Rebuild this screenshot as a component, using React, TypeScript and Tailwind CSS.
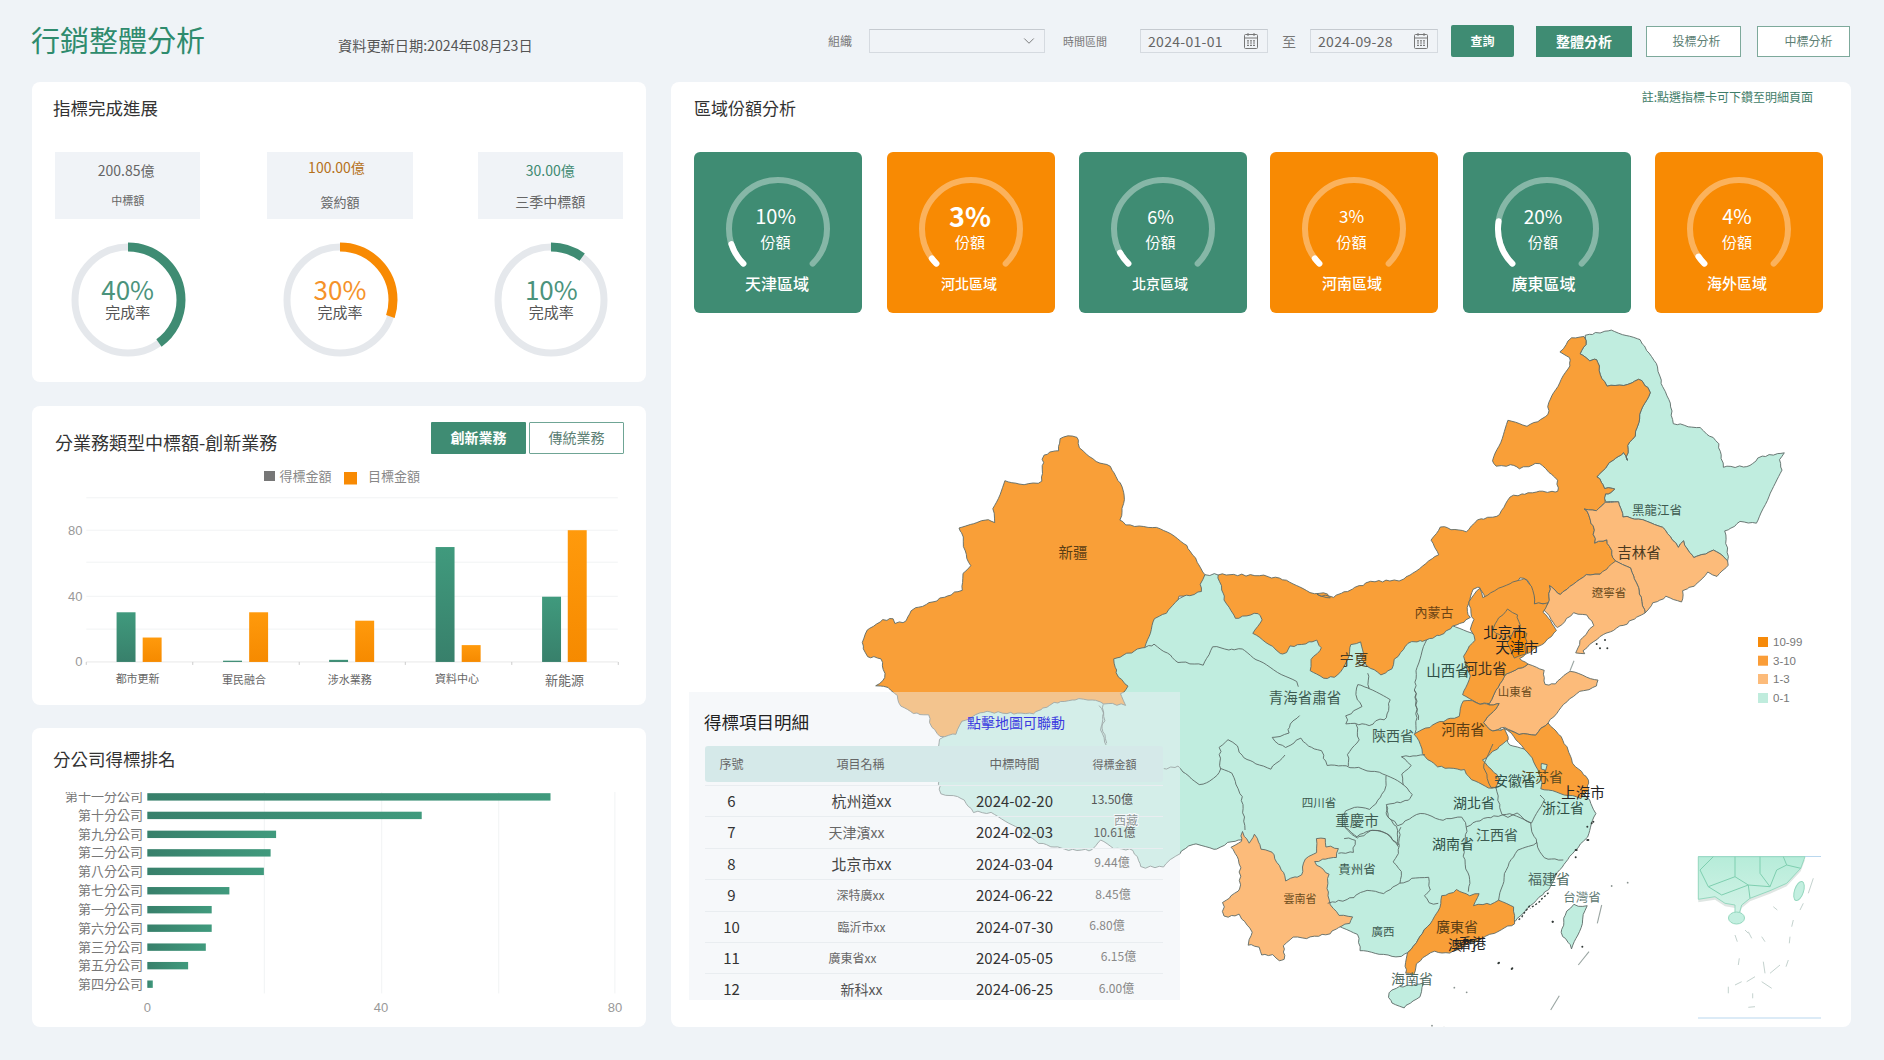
import React from "react";
import { ChevronDown } from "lucide-react";

type Pt = [number, number];
const crop = (ox: number, oy: number, sx: number, sy: number) => (...n: number[]): Pt[] => {
  const out: Pt[] = [];
  for (let i = 0; i < n.length; i += 2) out.push([ox + n[i] / sx, oy + n[i + 1] / sy]);
  return out;
};
const C4 = crop(670, 680, 2.958, 3);
const C6 = crop(850, 420, 3, 3);
const C7 = crop(1300, 320, 3, 3);
const C8 = crop(1100, 640, 3, 3);
const C9 = crop(1190, 800, 3, 3);
const C10 = crop(1680, 620, 3, 3);
const C11 = crop(1280, 610, 3, 3);
const C12 = crop(1400, 570, 3, 3);

const wob = (x: number, y: number): Pt => [
  x + 0.65 * Math.sin(x * 1.37 + y * 0.73) + 0.35 * Math.sin(x * 3.1 - y * 2.3),
  y + 0.65 * Math.sin(y * 1.51 - x * 0.67) + 0.35 * Math.sin(y * 2.9 + x * 2.1),
];
const toPath = (pts: Pt[], closed = true, rough = true) => {
  const all = closed ? [...pts, pts[0]] : pts;
  let d = "";
  for (let i = 0; i < all.length - 1; i++) {
    const [a, b] = [all[i], all[i + 1]];
    const steps = rough ? Math.max(1, Math.round(Math.hypot(b[0] - a[0], b[1] - a[1]) / 4)) : 1;
    for (let s = 0; s < steps; s++) {
      const t = s / steps;
      const x = a[0] + (b[0] - a[0]) * t;
      const y = a[1] + (b[1] - a[1]) * t;
      const [px, py] = rough ? wob(x, y) : [x, y];
      d += `${d ? "L" : "M"}${px.toFixed(1)} ${py.toFixed(1)}`;
    }
  }
  if (!closed) d += `L${all[all.length - 1][0].toFixed(1)} ${all[all.length - 1][1].toFixed(1)}`;
  return d + (closed ? "Z" : "");
};

const GREEN = "#c0eddf";
const O1 = "#f99f38";
const O2 = "#fcbb7a";
const O3 = "#f68a0a";

const mainland: Pt[] = [
  ...C6(1065, 465, 1103, 463),
  [1300, 620], [1440, 620], [1490, 640], [1480, 690], [1510, 745], [1560, 760], [1580, 785],
  ...C8(1440, 455, 1462, 470, 1487, 520, 1472, 560, 1460, 592, 1425, 630, 1397, 665, 1372, 700, 1345, 750, 1300, 790, 1245, 845),
  ...C9(720, 370, 655, 460, 620, 470, 570, 462, 510, 450, 505, 405, 460, 385, 300, 300, 200, 300, 155, 120),
  ...C8(395, 605, 340, 630, 290, 610, 265, 620, 210, 660, 190, 680, 125, 682, 100, 630, 40, 625, 0, 600),
  ...C4(1250, 510, 1180, 510, 1090, 490, 1020, 440, 950, 400, 900, 395, 860, 355, 800, 340, 795, 310, 795, 190),
  ...C6(270, 960, 400, 850, 600, 800, 900, 600, 1040, 500),
];

const xinjiang = C6(630, 55, 655, 48, 680, 50, 690, 85, 740, 125, 780, 140, 805, 180, 825, 225, 810, 300, 830, 315, 930, 325, 1010, 375, 1065, 465, 1050, 490, 1055, 515, 1020, 525, 990, 530, 950, 580, 915, 595, 885, 680, 790, 718, 800, 760, 835, 800, 812, 820, 825, 855, 760, 850, 700, 835, 610, 850, 550, 880, 480, 880, 400, 875, 335, 905, 320, 940, 270, 950, 240, 910, 235, 885, 190, 880, 150, 860, 140, 825, 115, 805, 80, 795, 105, 775, 95, 715, 50, 710, 35, 665, 50, 630, 100, 600, 130, 595, 135, 610, 170, 605, 185, 570, 250, 545, 335, 510, 340, 460, 360, 440, 345, 390, 335, 340, 325, 325, 405, 300, 435, 305, 430, 265, 465, 180, 510, 195, 575, 185, 580, 105, 625, 90);

const neimeng: Pt[] = [
  ...C7(780, 95, 815, 55, 855, 50, 858, 75, 840, 100, 870, 122, 890, 118, 905, 175, 920, 197, 985, 195, 1015, 175, 1050, 215, 1020, 285, 1005, 345, 985, 375, 980, 420, 972, 395, 930, 430, 890, 470, 915, 505, 945, 505, 935, 518, 915, 522, 915, 548, 890, 575, 855, 565, 880, 620, 885, 670, 920, 658, 945, 725, 940, 745, 900, 762, 860, 765, 780, 825, 750, 795, 745, 852, 705, 850, 685, 780, 660, 775, 640, 810, 555, 835, 540, 800, 520, 808, 500, 860, 510, 895),
  ...C12(160, 170, 120, 195, 80, 210, 50, 215),
  ...C11(385, 100, 345, 150, 335, 175, 305, 195, 270, 175, 245, 150, 250, 120, 240, 95, 215, 105, 195, 170, 165, 200, 130, 205, 90, 180, 95, 150, 125, 115, 110, 92, 30, 110, 20, 130),
  ...C6(1290, 700, 1270, 680, 1210, 640, 1235, 600, 1225, 580, 1155, 595, 1125, 540, 1103, 463, 1240, 467, 1310, 480, 1380, 520, 1430, 520, 1440, 535),
  ...C7(50, 825, 100, 830, 210, 785, 310, 780, 415, 705, 395, 660, 420, 620, 500, 635, 530, 600, 600, 585, 630, 530, 720, 515, 775, 515, 770, 480, 720, 430, 660, 445, 630, 435, 590, 440, 578, 420, 625, 300, 680, 320, 745, 285, 745, 250, 810, 140, 810, 110),
];

const hlj = C7(855, 45, 935, 30, 1020, 60, 1065, 120, 1085, 190, 1110, 250, 1120, 310, 1200, 325, 1255, 370, 1270, 440, 1340, 440, 1385, 410, 1455, 398, 1440, 420, 1445, 450, 1410, 520, 1370, 610, 1320, 605, 1275, 635, 1285, 720, 1240, 690, 1180, 715, 1150, 665, 1135, 680, 1090, 620, 1030, 600, 970, 590, 955, 545, 915, 545, 915, 522, 935, 518, 945, 505, 915, 505, 890, 470, 930, 430, 972, 395, 980, 420, 985, 375, 1005, 345, 1020, 285, 1050, 215, 1015, 175, 985, 195, 920, 197, 905, 175, 890, 118, 870, 122, 840, 100, 858, 75);
const jilin = C7(915, 548, 955, 545, 970, 590, 1030, 600, 1090, 620, 1135, 680, 1150, 665, 1180, 715, 1240, 690, 1285, 720, 1285, 735, 1250, 770, 1225, 755, 1190, 790, 1150, 815, 1145, 845, 1100, 830, 1060, 850, 1035, 880, 1015, 800, 990, 745, 945, 725, 920, 658, 885, 670, 880, 620, 855, 565, 890, 575);
const liaoning = C7(945, 725, 990, 745, 1015, 800, 1035, 880, 990, 905, 950, 925, 890, 955, 850, 990, 855, 1000, 830, 1000, 840, 960, 880, 915, 860, 885, 820, 880, 775, 925, 730, 870, 745, 852, 750, 795, 780, 825, 860, 765, 900, 762);
const hebei = C12(205, 95, 240, 55, 250, 80, 330, 40, 375, 25, 400, 60, 405, 100, 445, 100, 430, 125, 470, 180, 435, 220, 390, 245, 375, 250, 360, 265, 385, 285, 345, 300, 320, 310, 300, 340, 280, 375, 270, 400, 240, 400, 190, 375, 210, 320, 190, 260, 225, 210, 210, 175, 220, 150);
const beijing = C12(290, 150, 325, 120, 350, 135, 360, 165, 345, 190, 310, 205, 280, 180);
const tianjin = C12(345, 180, 380, 190, 375, 250, 345, 265, 320, 220);
const henan = C12(190, 390, 240, 400, 270, 405, 300, 400, 250, 460, 280, 485, 315, 475, 325, 510, 300, 530, 270, 550, 250, 570, 295, 625, 290, 650, 265, 655, 215, 630, 195, 600, 110, 590, 75, 560, 45, 490, 120, 455, 175, 440);
const shandong = C12(280, 375, 300, 340, 320, 310, 345, 300, 385, 285, 430, 300, 435, 345, 465, 340, 510, 305, 595, 330, 590, 350, 540, 365, 500, 395, 445, 460, 405, 495, 345, 490, 315, 470, 280, 485, 250, 460, 300, 400, 270, 405, 270, 400);
const jiangsu = C12(315, 475, 345, 490, 405, 495, 445, 460, 490, 510, 520, 580, 565, 630, 565, 660, 540, 685, 480, 670, 420, 655, 425, 640, 415, 600, 395, 565, 335, 490);
const yunnan = C9(155, 95, 175, 130, 195, 105, 215, 145, 245, 155, 290, 240, 335, 225, 345, 175, 380, 155, 380, 115, 405, 115, 410, 140, 445, 145, 440, 170, 375, 185, 415, 225, 410, 265, 420, 315, 445, 345, 485, 350, 480, 370, 455, 375, 420, 400, 350, 415, 310, 410, 280, 435, 285, 480, 265, 480, 250, 465, 215, 465, 205, 440, 175, 435, 185, 395, 150, 345, 100, 350, 100, 310, 150, 265, 150, 190, 125, 140, 155, 125);
const guangdong = C9(755, 290, 800, 270, 840, 285, 865, 280, 850, 315, 915, 310, 925, 300, 970, 320, 975, 370, 900, 405, 840, 430, 780, 460, 720, 455, 680, 490, 670, 525, 650, 520, 645, 485, 655, 460, 720, 370, 750, 325);
const hainan = C9(595, 580, 630, 560, 700, 550, 690, 590, 640, 625, 605, 610);
const taiwan = C9(1125, 345, 1150, 315, 1190, 320, 1175, 370, 1145, 445, 1115, 400);

const provinces: { p: Pt[]; f: string }[] = [
  { p: mainland, f: GREEN },
  { p: hlj, f: GREEN },
  { p: hainan, f: GREEN },
  { p: taiwan, f: GREEN },
  { p: xinjiang, f: O1 },
  { p: neimeng, f: O1 },
  { p: jilin, f: O2 },
  { p: liaoning, f: O2 },
  { p: shandong, f: O2 },
  { p: yunnan, f: O2 },
  { p: hebei, f: O1 },
  { p: henan, f: O1 },
  { p: jiangsu, f: O1 },
  { p: guangdong, f: O1 },
  { p: beijing, f: O1 },
  { p: tianjin, f: O3 },
  { p: C12(425, 580, 440, 585, 435, 600, 422, 598), f: GREEN },
];

const borders: Pt[][] = [
  C6(885, 680, 915, 675, 950, 700, 985, 725, 1060, 735, 1090, 680, 1145, 690, 1175, 685, 1230, 725, 1340, 785, 1345, 800),
  C6(750, 855, 762, 880, 755, 910, 770, 970),
  C4(1280, 75, 1285, 120, 1275, 150, 1290, 195),
  C8(190, 388, 235, 380, 265, 410, 300, 435, 330, 425, 360, 400, 360, 320, 385, 300, 410, 315, 430, 355, 470, 370, 510, 385, 555, 345),
  C8(600, 225, 570, 250, 565, 280, 515, 295, 555, 325, 600, 295, 625, 320, 665, 335, 680, 375, 740, 378, 800, 390, 860, 405, 910, 435, 935, 465, 925, 480, 860, 495, 860, 525, 890, 560, 895, 615),
  C8(360, 385, 395, 400, 425, 470, 435, 570),
  C8(860, 410, 855, 450, 810, 510, 775, 500, 735, 510, 735, 565, 770, 590, 810, 570, 850, 575, 895, 615),
  C8(770, 250, 775, 300, 745, 345, 745, 378),
  C8(805, 100, 805, 145, 775, 135, 765, 165, 785, 200, 740, 225, 740, 250, 820, 255, 830, 240, 860, 235, 870, 180, 805, 145),
  C11(440, 90, 410, 170, 405, 240, 415, 330),
  C8(945, 150, 950, 230, 945, 280),
  C8(975, 345, 905, 350, 935, 375, 905, 400, 910, 435),
  C9(415, 310, 470, 300, 530, 270, 580, 280, 630, 250, 690, 230, 715, 235, 720, 270, 705, 285, 720, 310, 745, 310),
  C9(630, 80, 625, 160, 610, 185, 635, 215, 630, 250),
  C9(590, 20, 595, 50, 625, 75, 690, 40, 760, 60, 815, 50, 830, 80, 820, 170, 840, 240, 835, 275),
  C9(465, 85, 500, 115, 550, 90, 590, 100, 625, 140),
  C9(465, 115, 495, 120, 490, 155, 445, 160),
  C9(830, 80, 880, 55, 960, 40, 1020, 70, 1040, 130),
  C9(925, 300, 955, 190, 985, 150, 1040, 130, 1060, 175, 1120, 180),
  C8(1180, 310, 1150, 370, 1170, 440, 1190, 445, 1205, 525, 1225, 535, 1250, 520, 1295, 550, 1335, 480, 1320, 465),
];

const dots: Pt[] = [
  ...C9(925, 490, 965, 507, 1088, 365, 1177, 440, 1157, 150, 1157, 172, 1192, 120, 1205, 70),
  ...C7(890, 972, 915, 960, 922, 985, 900, 985),
  ...C8(1358, 845, 1197, 968, 1237, 985, 1480, 545, 1462, 560, 1430, 630, 1465, 600),
];
const faintDots: Pt[] = C9(793, 563, 830, 577, 726, 677, 762, 683, 1265, 258, 1313, 248);
const blackCoast: Pt[][] = [
  C8(1370, 700, 1350, 730),
  C9(1020, 320, 985, 360),
  C8(1100, 905, 1155, 895),
  C9(840, 420, 790, 450),
  C8(1345, 760, 1290, 805),
];
const dashes: Pt[][] = [
  C9(1235, 315, 1222, 370),
  C9(1197, 455, 1165, 495),
  C9(1108, 587, 1082, 630),
  C12(522, 272, 510, 302),
];

const labels: { t: string; x: number; y: number; s: number; c: string; halo?: boolean }[] = [
  { t: "新疆", x: 1073, y: 551, s: 14.5, c: "#5a3d14" },
  { t: "內蒙古", x: 1434, y: 611, s: 13, c: "#6b4415" },
  { t: "黑龍江省", x: 1657, y: 509, s: 12.5, c: "#3d5a50" },
  { t: "吉林省", x: 1639, y: 551, s: 14.5, c: "#4a3a20" },
  { t: "遼寧省", x: 1609, y: 592, s: 11.5, c: "#6b4c20" },
  { t: "北京市", x: 1505, y: 631, s: 14.5, c: "#222222" },
  { t: "天津市", x: 1517, y: 646, s: 14.5, c: "#222222" },
  { t: "河北省", x: 1485, y: 667, s: 14.5, c: "#3a3020" },
  { t: "山西省", x: 1448, y: 669, s: 14.5, c: "#2f4f46" },
  { t: "山東省", x: 1515, y: 691, s: 11.5, c: "#6b4c20" },
  { t: "河南省", x: 1463, y: 728, s: 14.5, c: "#5a3d14" },
  { t: "陝西省", x: 1393, y: 735, s: 14, c: "#3d5a50" },
  { t: "青海省肅省", x: 1305, y: 696, s: 14.5, c: "#3d5a50" },
  { t: "宁夏", x: 1354, y: 658, s: 14.5, c: "#4a3a20" },
  { t: "江苏省", x: 1542, y: 776, s: 14, c: "#5a4a20" },
  { t: "安徽省", x: 1515, y: 780, s: 14, c: "#2f4f46" },
  { t: "上海市", x: 1583, y: 791, s: 14.5, c: "#222222" },
  { t: "浙江省", x: 1563, y: 807, s: 14, c: "#2f4f46" },
  { t: "湖北省", x: 1474, y: 802, s: 14, c: "#2f4f46" },
  { t: "四川省", x: 1319, y: 802, s: 11.5, c: "#3d5a50" },
  { t: "重慶市", x: 1357, y: 819, s: 14.5, c: "#3d5a50" },
  { t: "湖南省", x: 1453, y: 843, s: 14, c: "#2f4f46" },
  { t: "江西省", x: 1497, y: 834, s: 14, c: "#3d5a50" },
  { t: "貴州省", x: 1357, y: 868, s: 12.5, c: "#3d5a50" },
  { t: "雲南省", x: 1300, y: 898, s: 11, c: "#6b4c20" },
  { t: "廣西", x: 1383, y: 931, s: 11.5, c: "#3d5a50" },
  { t: "廣東省", x: 1457, y: 926, s: 14, c: "#5a3d14" },
  { t: "香港", x: 1472, y: 942, s: 14, c: "#222222" },
  { t: "澳門", x: 1462, y: 944, s: 14, c: "#222222" },
  { t: "福建省", x: 1549, y: 878, s: 14, c: "#4f6a62" },
  { t: "台灣省", x: 1582, y: 896, s: 12.5, c: "#5f7a74" },
  { t: "海南省", x: 1412, y: 978, s: 14, c: "#4f6a62" },
  { t: "西藏", x: 1126, y: 819, s: 12, c: "#3c4a46", halo: true },
];

const insetLand = C10(55, 710, 375, 710, 362, 745, 320, 790, 270, 812, 210, 835, 185, 855, 178, 880, 165, 880, 165, 855, 135, 850, 105, 830, 55, 838);
const insetLines: Pt[][] = [
  C10(100, 710, 60, 750, 85, 800, 165, 770, 165, 710),
  C10(85, 800, 125, 825, 205, 795, 210, 835),
  C10(165, 770, 205, 795, 270, 800, 240, 760, 240, 710),
  C10(270, 800, 290, 750, 320, 735, 310, 710),
  C10(320, 735, 362, 745),
];
const insetIslands: Pt[][] = [
  C10(178, 1015, 175, 1035), C10(165, 945, 172, 965), C10(205, 935, 215, 955), C10(245, 950, 255, 965),
  C10(330, 950, 328, 970), C10(340, 900, 335, 920), C10(370, 850, 360, 870), C10(400, 775, 385, 820),
  C10(325, 1020, 318, 1040), C10(250, 1025, 255, 1060), C10(300, 1035, 270, 1060), C10(145, 1100, 145, 1120),
  C10(165, 1095, 185, 1085), C10(200, 1085, 225, 1070), C10(245, 1085, 275, 1105), C10(218, 1120, 218, 1135), C10(205, 1162, 225, 1160),
  C10(280, 860, 292, 870), C10(205, 940, 195, 930),
];

function ChinaMap() {
  return (
    <svg viewBox="671 320 1180 707" className="block w-[1180px] h-[707px] mt-[7px]">
      <defs>
        <linearGradient id="insetFade" x1="0" y1="0" x2="0" y2="1">
          <stop offset="0" stopColor="#b6ecd9" />
          <stop offset="1" stopColor="#d3f3e7" />
        </linearGradient>
      </defs>
      {provinces.map((r, i) => (
        <path key={i} d={toPath(r.p)} fill={r.f} stroke="#5c6a66" strokeWidth={0.9} strokeLinejoin="round" />
      ))}
      {borders.map((b, i) =>
        b.length > 1 ? <path key={i} d={toPath(b, false)} fill="none" stroke="#5c6a66" strokeWidth={0.9} /> : null
      )}
      {blackCoast.map((b, i) => (
        <path key={i} d={toPath(b, false)} fill="none" stroke="#2e3a36" strokeWidth={1.4} strokeDasharray="2 2" />
      ))}
      {dashes.map((b, i) => (
        <path key={i} d={toPath(b, false, false)} fill="none" stroke="#9aa5a2" strokeWidth={1.1} />
      ))}
      {dots.map((p, i) => (
        <circle key={i} cx={p[0]} cy={p[1]} r={1} fill="#333a38" />
      ))}
      {faintDots.map((p, i) => (
        <circle key={i} cx={p[0]} cy={p[1]} r={0.9} fill="#8a9390" />
      ))}
      {labels.map((l) => (
        <text
          key={l.t}
          x={l.x}
          y={l.y}
          fontSize={l.s}
          fill={l.c}
          textAnchor="middle"
          dominantBaseline="central"
          stroke={l.halo ? "#ffffff" : undefined}
          strokeWidth={l.halo ? 2 : undefined}
          paintOrder="stroke"
        >
          {l.t}
        </text>
      ))}
      {[
        ["#f68a0a", "10-99", 642],
        ["#fa9d38", "3-10", 660.7],
        ["#fcbb7a", "1-3", 679],
        ["#c0ecdd", "0-1", 698],
      ].map(([c, t, y]) => (
        <g key={t as string}>
          <rect x={1758} y={(y as number) - 5} width={10} height={10} fill={c as string} />
          <text x={1773} y={y as number} fontSize={11.5} fill="#777777" dominantBaseline="central" className="font-['Liberation_Sans',sans-serif]">
            {t}
          </text>
        </g>
      ))}
      <line x1={1698} y1={856.5} x2={1821} y2={856.5} stroke="#b9d7ee" strokeWidth={1} />
      <line x1={1698} y1={1018} x2={1821} y2={1018} stroke="#b9d7ee" strokeWidth={1} />
      <path d={toPath(insetLand, true, false)} transform="translate(0 3)" fill="#dfe6e3" />
      <path d={toPath(insetLand, true, false)} fill="url(#insetFade)" stroke="#95d8bf" strokeWidth={1} />
      {insetLines.map((b, i) => (
        <path key={i} d={toPath(b, false, false)} fill="none" stroke="#7fcfb0" strokeWidth={1} />
      ))}
      <ellipse cx={1736.5} cy={918} rx={8} ry={6} fill="#c3efe0" stroke="#95d8bf" />
      <ellipse cx={1799} cy={891} rx={4.5} ry={10} transform="rotate(18 1799 891)" fill="#c3efe0" stroke="#95d8bf" />
      {insetIslands.map((b, i) => (
        <path key={i} d={toPath(b, false, false)} fill="none" stroke="#c4d2ce" strokeWidth={1} />
      ))}
    </svg>
  );
}

function Calendar() {
  return (
    <svg viewBox="0 0 16 18" className="w-[16px] h-[18px]" fill="none" stroke="#777" strokeWidth={1}>
      <rect x="1.5" y="2.5" width="13" height="14" rx="1" />
      <path d="M1.5 6h13M5 1v3M11 1v3" />
      <path d="M4 8.8h2M7 8.8h2M10 8.8h2M4 11h2M7 11h2M10 11h2M4 13.4h2M7 13.4h2M10 13.4h2" strokeWidth={1.2} />
    </svg>
  );
}

function Donut({ pct, color, numClass }: { pct: number; color: string; numClass: string }) {
  const r = 53;
  const len = 2 * Math.PI * r;
  return (
    <div className="relative w-[118px] h-[118px]">
      <svg viewBox="0 0 118 118" className="w-[118px] h-[118px]">
        <circle cx="59" cy="59" r={r} fill="none" stroke="#e5e8ec" strokeWidth={7} />
        <circle
          cx="59"
          cy="59"
          r={r}
          fill="none"
          stroke={color}
          strokeWidth={9}
          strokeDasharray={`${(len * pct) / 100} ${len}`}
          transform="rotate(-90 59 59)"
        />
      </svg>
      <div className="absolute inset-0 flex flex-col items-center pt-[32px]">
        <div className={`h-[32px] leading-[32px] text-[26px] ${numClass}`}>{pct}%</div>
        <div className="h-[22px] leading-[22px] -mt-[4px] text-[15px] text-[#555]">完成率</div>
      </div>
    </div>
  );
}

const arcPoint = (deg: number, r: number): Pt => {
  const a = ((deg - 90) * Math.PI) / 180;
  return [60 + r * Math.cos(a), 55 + r * Math.sin(a)];
};
const arc = (from: number, to: number, r = 49) => {
  const [x1, y1] = arcPoint(from, r);
  const [x2, y2] = arcPoint(to, r);
  return `M${x1.toFixed(2)} ${y1.toFixed(2)}A${r} ${r} 0 ${to - from > 180 ? 1 : 0} 1 ${x2.toFixed(2)} ${y2.toFixed(2)}`;
};

const regionCards = [
  { pct: 10, name: "天津區域", bg: "bg-[#3f8c73]", track: "#86b7a7", pctC: "text-[20px]", nameC: "text-[16px] pr-[2px]", m: "", tx: "pr-[5px]" },
  { pct: 3, name: "河北區域", bg: "bg-[#f88a03]", track: "#fbb25c", pctC: "text-[27px] font-bold", nameC: "text-[14px] pr-[4px]", m: "ml-[25px]", tx: "pr-[2px]" },
  { pct: 6, name: "北京區域", bg: "bg-[#3f8c73]", track: "#86b7a7", pctC: "text-[18px]", nameC: "text-[14px] pr-[6px]", m: "ml-[24px]", tx: "pr-[5px]" },
  { pct: 3, name: "河南區域", bg: "bg-[#f88a03]", track: "#fbb25c", pctC: "text-[17px]", nameC: "text-[15px] pr-[4px]", m: "ml-[23px]", tx: "pr-[5px]" },
  { pct: 20, name: "廣東區域", bg: "bg-[#3f8c73]", track: "#86b7a7", pctC: "text-[19px]", nameC: "text-[16px] pr-[7px]", m: "ml-[25px]", tx: "pr-[8px]" },
  { pct: 4, name: "海外區域", bg: "bg-[#f88a03]", track: "#fbb25c", pctC: "text-[20px]", nameC: "text-[15px] pr-[4px]", m: "ml-[24px]", tx: "pr-[4px]" },
];

function RegionCard({ c }: { c: (typeof regionCards)[number] }) {
  const start = 225;
  const sweep = (c.pct / 100) * 270;
  return (
    <div className={`w-[168px] h-[161px] rounded-[6px] ${c.m} ${c.bg} flex flex-col items-center pt-[22px] text-white`}>
      <div className="relative w-[120px] h-[100px]">
        <svg viewBox="0 0 120 100" className="w-[120px] h-[100px]">
          <path d={arc(start, start + 270)} fill="none" stroke={c.track} strokeWidth={6} strokeLinecap="round" />
          <path d={arc(start, start + sweep)} fill="none" stroke="#ffffff" strokeWidth={6} strokeLinecap="round" />
        </svg>
        <div className={`absolute inset-0 flex flex-col items-center pt-[27px] ${c.tx}`}>
          <div className={`h-[30px] leading-[30px] ${c.pctC}`}>{c.pct}%</div>
          <div className="h-[22px] leading-[22px] text-[15px]">份額</div>
        </div>
      </div>
      <div className={`h-[20px] leading-[18px] font-medium ${c.nameC}`}>{c.name}</div>
    </div>
  );
}

const X = (z: number) => z / 2.376;
const Y = (z: number) => 400 + z / 2.376;

const barData = [
  { g: [277, 322, 502], o: [339, 384, 562], t: "都市更新", cx: 327, y: 657, s: 11 },
  { g: [530, 575, 617], o: [592, 637, 502], t: "軍民融合", cx: 580, y: 660, s: 11 },
  { g: [782, 827, 615], o: [844, 889, 522], t: "涉水業務", cx: 831, y: 660, s: 11 },
  { g: [1035, 1080, 347], o: [1097, 1142, 580], t: "資料中心", cx: 1086, y: 657, s: 11 },
  { g: [1288, 1333, 465], o: [1349, 1394, 307], t: "新能源", cx: 1341, y: 661, s: 13 },
];

function BarChart() {
  const base = Y(620);
  return (
    <svg viewBox="32 460 614 244" className="block w-[614px] h-[244px] mt-[7px]">
      <defs>
        <linearGradient id="gBar" x1="0" y1="0" x2="0" y2="1">
          <stop offset="0" stopColor="#409a7d" />
          <stop offset="1" stopColor="#38806b" />
        </linearGradient>
        <linearGradient id="oBar" x1="0" y1="0" x2="0" y2="1">
          <stop offset="0" stopColor="#ff9a0c" />
          <stop offset="1" stopColor="#f68a00" />
        </linearGradient>
      </defs>
      <rect x={264} y={470} width={11} height={10} fill="#777777" />
      <text x={279.5} y={474} fontSize={13} fill="#888888" dominantBaseline="central">得標金額</text>
      <rect x={344} y={471} width={13} height={12.5} fill="#f88a03" />
      <text x={368} y={474} fontSize={13} fill="#888888" dominantBaseline="central">目標金額</text>
      {[230, 307, 383, 464, 542].map((z) => (
        <line key={z} x1={X(205)} x2={X(1468)} y1={Y(z)} y2={Y(z)} stroke="#f1f3f4" strokeWidth={1} />
      ))}
      <line x1={X(205)} x2={X(1468)} y1={base} y2={base} stroke="#e8e8e8" strokeWidth={1} />
      {[205, 458, 711, 963, 1216, 1469].map((z) => (
        <line key={z} x1={X(z)} x2={X(z)} y1={base} y2={base + 3} stroke="#cccccc" strokeWidth={1} />
      ))}
      {[["80", 307], ["40", 464], ["0", 620]].map(([t, z]) => (
        <text key={t as string} x={X(196)} y={Y(z as number)} fontSize={13} fill="#999999" textAnchor="end" dominantBaseline="central" className="font-['Liberation_Sans',sans-serif]">
          {t}
        </text>
      ))}
      {barData.map((b) => (
        <g key={b.t}>
          <rect x={X(b.g[0])} y={Y(b.g[2])} width={X(b.g[1] - b.g[0])} height={base - Y(b.g[2])} fill="url(#gBar)" />
          <rect x={X(b.o[0])} y={Y(b.o[2])} width={X(b.o[1] - b.o[0])} height={base - Y(b.o[2])} fill="url(#oBar)" />
          <text x={X(b.cx)} y={Y(b.y)} fontSize={b.s} fill="#666666" textAnchor="middle" dominantBaseline="central">
            {b.t}
          </text>
        </g>
      ))}
    </svg>
  );
}

const rankData: [string, number, number][] = [
  ["第十一分公司", 943, 1308],
  ["第十分公司", 987, 1002],
  ["第九分公司", 1032, 656],
  ["第二分公司", 1076, 643],
  ["第八分公司", 1120, 627],
  ["第七分公司", 1166, 545],
  ["第一分公司", 1211, 503],
  ["第六分公司", 1255, 503],
  ["第三分公司", 1300, 489],
  ["第五分公司", 1344, 447],
  ["第四分公司", 1388, 363],
];

function RankChart() {
  return (
    <svg viewBox="32 792 614 235" className="block w-[614px] h-[235px]">
      <defs>
        <linearGradient id="rBar" x1="0" y1="0" x2="1" y2="0">
          <stop offset="0" stopColor="#38806b" />
          <stop offset="1" stopColor="#409a7d" />
        </linearGradient>
      </defs>
      {[628, 907, 1185, 1461].map((z) => (
        <line key={z} x1={X(z)} x2={X(z)} y1={Y(915)} y2={Y(1410)} stroke="#f1f3f4" strokeWidth={1} />
      ))}
      {rankData.map(([t, y, e]) => (
        <g key={t}>
          <text x={X(340)} y={Y(y) - 1} fontSize={13} fill="#777777" textAnchor="end" dominantBaseline="central">{t}</text>
          <rect x={X(350)} y={Y(y) - 3.7} width={X(e - 350)} height={7.4} fill="url(#rBar)" />
        </g>
      ))}
      {[["0", 350], ["40", 905], ["80", 1461]].map(([t, z]) => (
        <text key={t as string} x={X(z as number)} y={Y(1443)} fontSize={13} fill="#999999" textAnchor="middle" dominantBaseline="central" className="font-['Liberation_Sans',sans-serif]">
          {t}
        </text>
      ))}
    </svg>
  );
}

const rows = [
  { n: 6, name: "杭州道xx", nc: "text-[15px] text-[#444] pl-[2px]", d: "2024-02-20", a: "13.50億", ac: "text-[12px] text-[#555] pr-[5px] mb-[5px]" },
  { n: 7, name: "天津濱xx", nc: "text-[14px] text-[#666] pr-[8px]", d: "2024-02-03", a: "10.61億", ac: "text-[12px] text-[#666] mb-[2px]" },
  { n: 8, name: "北京市xx", nc: "text-[15px] text-[#444] pl-[2px]", d: "2024-03-04", a: "9.44億", ac: "text-[12px] text-[#888] pr-[5px] mb-[4px]" },
  { n: 9, name: "深特廣xx", nc: "text-[12px] text-[#666]", d: "2024-06-22", a: "8.45億", ac: "text-[12px] text-[#888] pr-[3px] mb-[3px]" },
  { n: 10, name: "臨沂市xx", nc: "text-[12px] text-[#666] pl-[2px]", d: "2024-07-30", a: "6.80億", ac: "text-[12px] text-[#888] pr-[15px] mb-[3px]" },
  { n: 11, name: "廣東省xx", nc: "text-[12px] text-[#666] pr-[16px]", d: "2024-05-05", a: "6.15億", ac: "text-[12px] text-[#888] pl-[8px] mb-[4px]" },
  { n: 12, name: "新科xx", nc: "text-[14px] text-[#555] pl-[2px]", d: "2024-06-25", a: "6.00億", ac: "text-[12px] text-[#888] pl-[4px] mb-[4px]" },
];

function ProjectTable() {
  return (
    <div className="absolute left-[18px] top-[610px] w-[491px] h-[308px] overflow-hidden bg-[rgba(235,240,245,0.46)]">
      <div className="h-[54px] pt-[7px] pl-[15px] flex items-center">
        <div className="w-[106px] text-[17.5px] text-[#222] whitespace-nowrap">得標項目明細</div>
        <div className="ml-[157px] text-[14px] text-[#3a3ae0] whitespace-nowrap">點擊地圖可聯動</div>
      </div>
      <div className="mx-[16px] w-[458px]">
        <div className="h-[36px] rounded-[3px] bg-[#d5e9e9] grid grid-cols-[53px_205px_103px_97px] items-center text-[#666] text-center">
          <div className="text-[12px]">序號</div>
          <div className="text-[12px]">項目名稱</div>
          <div className="text-[12.5px]">中標時間</div>
          <div className="text-[11px]">得標金額</div>
        </div>
        <div className="mt-[3px] border-t border-[#e9edf0]">
          {rows.map((r) => (
            <div key={r.n} className="h-[31.4px] border-b border-[#e9edf0] grid grid-cols-[53px_205px_103px_97px] items-center text-center whitespace-nowrap">
              <div className="text-[15px] text-[#333]">{r.n}</div>
              <div className={r.nc}>{r.name}</div>
              <div className="text-[15px] text-[#333]">{r.d}</div>
              <div className={r.ac}>{r.a}</div>
            </div>
          ))}
        </div>
      </div>
    </div>
  );
}

function DateBox({ value }: { value: string }) {
  return (
    <div className="w-[128px] h-[24px] flex items-center justify-between pl-[7px] pr-[8px] border border-[#d5dae0] border-t-[#c5cad0] text-[14px] tracking-[0.3px] text-[#666] bg-[#f0f3f7]">
      <span>{value}</span>
      <Calendar />
    </div>
  );
}

export default function App() {
  return (
    <div className="w-[1884px] h-[1060px] bg-[#eff3f7] px-[32px] font-['Noto_Sans_CJK_TC','Noto_Sans',sans-serif] overflow-hidden">
      <header className="h-[82px] flex items-center">
        <h1 className="w-[172px] text-[29px] leading-none -mt-[4px] -ml-[1px] text-[#2e8b6d] whitespace-nowrap">行銷整體分析</h1>
        <div className="ml-[135px] mt-[10px] text-[14.2px] text-[#555] whitespace-nowrap">資料更新日期:2024年08月23日</div>
        <div className="ml-auto mr-[2px] flex items-center">
          <span className="text-[12px] text-[#777] mr-[17px]">組織</span>
          <div className="w-[176px] h-[24px] flex items-center justify-end pr-[6px] border border-[#d5dae0] border-t-[#c5cad0] bg-[#f0f3f7]">
            <ChevronDown size={18} strokeWidth={1} color="#555" />
          </div>
          <span className="text-[11px] text-[#777] ml-[18px] mr-[33px] whitespace-nowrap">時間區間</span>
          <DateBox value="2024-01-01" />
          <span className="w-[42px] text-center text-[14px] text-[#777]">至</span>
          <DateBox value="2024-09-28" />
          <button className="ml-[13px] w-[63px] h-[32px] rounded-[2px] bg-[#3f8c73] text-white text-[12px] font-bold">查詢</button>
          <button className="ml-[22px] w-[96px] h-[31px] bg-[#3f8c73] text-white text-[14px] font-bold">整體分析</button>
          <button className="ml-[14px] w-[95px] h-[31px] pl-[6px] bg-white border border-[#7da99b] text-[#5d7f74] text-[12px]">投標分析</button>
          <button className="ml-[16px] w-[93px] h-[31px] pl-[10px] bg-white border border-[#7da99b] text-[#5d7f74] text-[12px]">中標分析</button>
        </div>
      </header>

      <div className="flex gap-[25px]">
        <div className="w-[614px] flex flex-col gap-[23.5px]">
          <section className="h-[300px] bg-white rounded-[8px] px-[23px]">
            <h2 className="h-[54px] pb-[2px] -ml-[2px] flex items-center text-[17.5px] font-normal text-[#333]">指標完成進展</h2>
            <div className="mt-[16px] flex">
              <div className="w-[146px] h-[67px] bg-[#f0f3f7] flex flex-col items-center pt-[8px]">
                <div className="h-[20px] leading-[20px] pr-[3px] text-[14px] text-[#666]">200.85億</div>
                <div className="h-[18px] leading-[18px] mt-[11px] text-[11px] text-[#666]">中標額</div>
              </div>
              <div className="ml-[67px] w-[146px] h-[67px] bg-[#f0f3f7] flex flex-col items-center pt-[5px]">
                <div className="h-[20px] leading-[20px] pr-[7px] text-[14px] text-[#b5711a]">100.00億</div>
                <div className="h-[18px] leading-[18px] mt-[16px] text-[13px] text-[#666]">簽約額</div>
              </div>
              <div className="ml-[65px] w-[146px] h-[67px] bg-[#f0f3f7] flex flex-col items-center pt-[8px]">
                <div className="h-[20px] leading-[20px] text-[14px] text-[#3e8a72]">30.00億</div>
                <div className="h-[18px] leading-[18px] mt-[12px] text-[14px] text-[#666]">三季中標額</div>
              </div>
            </div>
            <div className="mt-[22px] flex">
              <div className="w-[146px] flex justify-center"><Donut pct={40} color="#3f8c73" numClass="text-[#4b937c]" /></div>
              <div className="ml-[67px] w-[146px] flex justify-center"><Donut pct={30} color="#f88a03" numClass="text-[#f5922a]" /></div>
              <div className="ml-[65px] w-[146px] flex justify-center pl-[2px]"><Donut pct={10} color="#3f8c73" numClass="text-[#4b937c]" /></div>
            </div>
          </section>

          <section className="h-[299px] bg-white rounded-[8px] pt-[16px]">
            <div className="h-[32px] pl-[23px] pr-[22px] flex justify-between items-start">
              <h2 className="mt-[4px] h-[32px] leading-[32px] text-[18px] font-normal text-[#333] whitespace-nowrap">分業務類型中標額-創新業務</h2>
              <div className="flex gap-[3px]">
                <button className="w-[95px] h-[32px] rounded-[1px] bg-[#3f8c73] text-white text-[14px] font-bold">創新業務</button>
                <button className="w-[95px] h-[32px] rounded-[1px] bg-white border border-[#6fa595] text-[#5d7f74] text-[14px]">傳統業務</button>
              </div>
            </div>
            <BarChart />
          </section>

          <section className="h-[299px] bg-white rounded-[8px]">
            <h2 className="h-[64px] pb-[2px] pl-[21px] flex items-center text-[17.5px] font-normal text-[#333]">分公司得標排名</h2>
            <RankChart />
          </section>
        </div>

        <section className="relative w-[1180px] h-[945px] bg-white rounded-[8px] overflow-hidden">
          <div className="h-[54px] pl-[23px] pr-[38px] flex justify-between">
            <h2 className="h-[54px] pb-[2px] flex items-center text-[17px] font-normal text-[#333]">區域份額分析</h2>
            <div className="mt-[6px] h-[18px] leading-[18px] text-[12px] text-[#3f7d69] whitespace-nowrap">註:點選指標卡可下鑽至明細頁面</div>
          </div>
          <div className="mt-[16px] pl-[23px] flex">
            {regionCards.map((c) => (
              <RegionCard key={c.name} c={c} />
            ))}
          </div>
          <ChinaMap />
          <ProjectTable />
        </section>
      </div>
    </div>
  );
}
